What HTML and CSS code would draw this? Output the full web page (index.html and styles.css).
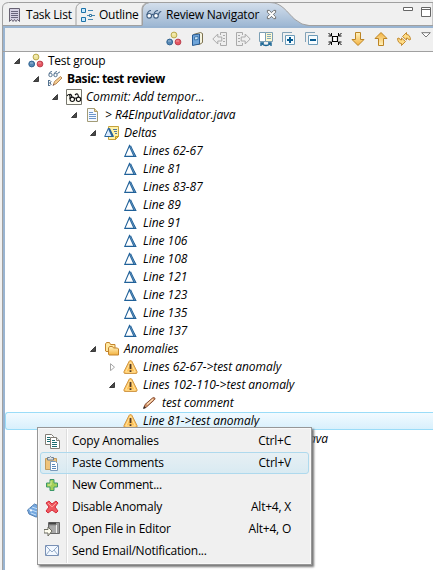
FILE: index.html
```html
<!DOCTYPE html>
<html lang="en">
<head>
<meta charset="utf-8">
<title>Review Navigator</title>
<link rel="stylesheet" href="styles.css">
</head>
<body>
<svg class="defs" width="0" height="0">
<defs>
<linearGradient id="gold" x2="0" y2="1"><stop stop-color="#fff3c0"/><stop offset="1" stop-color="#f3b13f"/></linearGradient>
<linearGradient id="tab" x2="0" y2="1"><stop stop-color="#d4dfec"/><stop offset="1" stop-color="#99b4d1"/></linearGradient>
<symbol id="group" viewBox="0 0 16 16"><circle cx="8" cy="4" r="2.9" fill="#eee49a" stroke="#b9a94c"/><circle cx="3.7" cy="11" r="2.9" fill="#5688b5" stroke="#326592"/><circle cx="12" cy="11" r="2.9" fill="#e65661" stroke="#bd4452"/><path d="M2 10h3M10 10h3M6 3h3" stroke="#fff" opacity=".45"/></symbol>
<symbol id="glasses" viewBox="0 0 16 10"><g fill="#fff" stroke="#405f82" stroke-width="1.1"><circle cx="3.2" cy="6.3" r="2.3"/><circle cx="10" cy="6.3" r="2.3"/><path d="M1 5.5C1 3 3 1 5 1M5.5 5.5q1-1.2 2.2 0M8 4.5Q9 1 12 1M12.3 5.5Q13 2 15.3 2" fill="none"/></g></symbol>
<symbol id="review" viewBox="0 0 16 16"><g fill="none" stroke="#54728f"><circle cx="3.5" cy="4" r="1.7"/><circle cx="8.5" cy="4" r="1.7"/><path d="M2 3Q2.500.5 5 .5M7 3Q8 .5 10 .5M10.500 3Q11 1 13 1"/><path d="M1.500 9v6M1.500 9.500H3q2 1 0 2.500H2M3 12q2.500 1 0 2.500H1"/></g><path d="M6.500 13.500l1-3 6-5 1.500 1.500-6 6z" fill="#f5cd91" stroke="#b98a58"/><path d="M5.500 15l1-2 1 1z" fill="#633"/></symbol>
<symbol id="commit" viewBox="0 0 16 16"><path d="M.5.5h15v15H.5z" fill="#fffef5" stroke="#77776f"/><g fill="none" stroke="#111" stroke-width="1.1"><circle cx="6.300" cy="10.300" r="2.200"/><circle cx="12.500" cy="10.300" r="2.200"/><path d="M1 7q2-3 3 0v3M8.500 9.500q.9-1 1.800 0M3.500 6q1.500-2 2.500 2M9 6q3-3 3.500 2"/></g></symbol>
<symbol id="file" viewBox="0 0 16 16"><path d="M2.500 1.500h7l3 3v10h-10z" fill="#f5f9ff" stroke="#a29b76"/><path d="M9.500 1.500v3h3" fill="#e5d7a1" stroke="#b49d5d"/><path d="M4 5.500h4M4 7.500h7M4 9.500h7M4 11.500h7" stroke="#6c95ca"/></symbol>
<symbol id="deltas" viewBox="0 0 16 16"><path d="M4.500 1.500h10v10l-3 3h-7z" fill="#fff2a8" stroke="#c4a13c"/><path d="M11.500 14.500v-3h3z" fill="#f6d24a" stroke="#c59b24"/><path d="M9 4.500h4M10 6.500h3M11 8.500h2" stroke="#54799d"/><path d="M4.500 3L.7 11.500h8.800z" fill="#dcecff" stroke="#286398"/><path d="M5 3.500l3.500 7.500" stroke="#286398" stroke-width="2"/></symbol>
<symbol id="delta" viewBox="0 0 16 16"><path d="M6.500 2.500L1.800 13.400h11z" fill="#fff" stroke="#206199" stroke-width="1.100"/><path d="M7 3l4.600 10" stroke="#206199" stroke-width="2.300"/><path d="M7.300 3.500l4.400 9.500" stroke="#81a9cc" stroke-width=".6"/></symbol>
<symbol id="folders" viewBox="0 0 16 16"><path d="M1.500 10V3l1-1.500h3l1 2h4.500v7H2z" fill="#ffe8a0" stroke="#c4842d"/><path d="M4.500 13V7l1-1.500h3l1 1.500h4l1 1v6H5z" fill="url(#gold)" stroke="#c4842d"/></symbol>
<symbol id="warn" viewBox="0 0 16 16"><path d="M7.500 1.500q1 0 1.500 1l5 10q.5 2-1 2H2q-1.500 0-1-2l5-10q.5-1 1.500-1z" fill="#ffc357" stroke="#d19a4c"/><path d="M7.500 3L12.300 13H2.700z" fill="none" stroke="#ffe3a2"/><path d="M7.500 5v5M7.500 11.300v1.800" stroke="#543b26" stroke-width="1.800"/></symbol>
<symbol id="pencil" viewBox="0 0 16 16"><path d="M2 13l1-3.500 7.500-6.500q1.500-1 2.300 0t-.8 2.200L4.500 12z" fill="#d89568" stroke="#875037"/><path d="M5 9.500l6-5.300" stroke="#ffe2bd" stroke-width="1.200"/><path d="M1 14l1-3 2 2z" fill="#352824"/></symbol>
<symbol id="open" viewBox="0 0 8 8"><path d="M6.500 1.500v5h-5z" fill="#494949" stroke="#222" stroke-width=".8"/></symbol>
<symbol id="closed" viewBox="0 0 8 8"><path d="M2.500.700l4 3.500-4 3.500z" fill="#fff" stroke="#a6a6a6"/></symbol>
<symbol id="book" viewBox="0 0 16 16"><path d="M4.500 3.500l7-2 2 1v9l-3 2h-6z" fill="#f6f4df" stroke="#7c7150"/><path d="M3.500 4l7-1v10l-7 1.500z" fill="#6fa5da" stroke="#295b93"/><path d="M5.500 6l3.500-.5v3l-3.500.5z" fill="#c8e1f7" stroke="#4279aa"/></symbol>
<symbol id="back" viewBox="0 0 16 16"><path d="M8.500 4V1.500h6v13h-6V12M11 4.500h2M11 7.500h2M11 10.500h2" fill="#eee" stroke="#aaa"/><path d="M.8 8l5-5v3h4v4h-4v3z" fill="#efefef" stroke="#aaa"/></symbol>
<symbol id="both" viewBox="0 0 16 16"><path d="M1.500 1.500h6v9h-6z" fill="#fff" stroke="#7c9fb4"/><path d="M7.500 1.500h7v9h-7z" fill="#fff8cf" stroke="#7c9fb4"/><path d="M9 3.500h4M9 5.500h4M9 7.500h4" stroke="#83aabd"/><path d="M4 13q4 3 8 0M3 15v-3h3M13 15v-3h-3" fill="none" stroke="#176392" stroke-width="1.400"/></symbol>
<symbol id="minus" viewBox="0 0 16 16"><path d="M1.500 11V1.500H11" fill="none" stroke="#82a2b7"/><path d="M4.500 4.500h9v9h-9z" fill="#f6fcff" stroke="#6e9cb9"/><path d="M6 9h6" stroke="#075b91" stroke-width="2"/></symbol>
<symbol id="focus" viewBox="0 0 16 16"><path d="M5.500 5.500h5v5h-5z" fill="#fff" stroke="#000" stroke-width="1.200"/><path d="M1.500 2l3 3M14.500 2l-3 3M1.500 14l3-3M14.500 14l-3-3M4.500 2v3h-3M11.500 2v3h3M4.500 14v-3h-3M11.500 14v-3h3" fill="none" stroke="#000"/></symbol>
<symbol id="down" viewBox="0 0 16 16"><path d="M5.500 1.500h5v7h3.500L8 14.500 2 8.500h3.500z" fill="url(#gold)" stroke="#bc8424"/></symbol>
<symbol id="sync" viewBox="0 0 16 16"><path id="sync-arrow" d="M6.500 5.500l4-4v2q3.500 0 4 5l-1.500.5q-.5-2-2.500-2v2z" fill="#ffdc85" stroke="#bd8020" stroke-width=".9"/><path d="M9.500 10.500l-4 4v-2q-3.500 0-4-5L3 7q.5 2 2.500 2V7z" fill="#ffdc85" stroke="#bd8020" stroke-width=".9"/></symbol>
<symbol id="copy" viewBox="0 0 16 16"><path d="M1.500 1.500h6l2 2v8h-8z" fill="#fff" stroke="#817d75"/><path d="M3 4.500h3M3 6.500h4M3 8.500h4" stroke="#1b6c70"/><path d="M6.500 4.500h6l3 3v8h-9z" fill="#fff" stroke="#817d75"/><path d="M12.500 4.500v3h3" fill="#eee" stroke="#817d75"/><path d="M8 7.500h3M8 9.500h5M8 11.500h5M8 13.500h5" stroke="#1b6c70"/></symbol>
<symbol id="paste" viewBox="0 0 16 16"><path d="M1.500 3.500h11v11h-11z" fill="#efc47c" stroke="#c39a5b"/><path d="M3.500 4V2.500h2q1-2 2 0h2V5h-6z" fill="#e0e1df" stroke="#6e7e90"/><path d="M6.500 6.500h5l2 2v7h-7z" fill="#fff" stroke="#7a9abb"/><path d="M8 9.500h3M8 11.500h4M8 13.500h4" stroke="#5686b8"/></symbol>
<symbol id="plus" viewBox="0 0 16 16"><path d="M6 2.500h4V6h3.500v4H10v3.500H6V10H2.500V6H6z" fill="#a5cf5a" stroke="#3c9868"/><path d="M7 4v4H4" stroke="#d9ec97" fill="none"/></symbol>
<symbol id="cross" viewBox="0 0 16 16"><path d="M2 4l3-2 3 3 4-3 2 2-3 4 3 4-2 2-4-3-4 3-2-2 3-4z" fill="#ef5960" stroke="#d52c3a"/><path d="M4 4l4 4 4-4" stroke="#ff9e97" fill="none"/></symbol>
<symbol id="editor" viewBox="0 0 16 16"><path d="M4.500 1.500h11v11h-11z" fill="#999" stroke="#666"/><path d="M5 2.500h7" stroke="#444" stroke-width="2"/><path d="M6 5h6v7H6z" fill="#aaa"/><path d="M12.500 4v8" stroke="#eee"/><path d="M0 8.500h4V6l4 4-4 5v-3H0z" fill="#fffef0" stroke="#6b6b60"/></symbol>
<symbol id="mail" viewBox="0 0 16 16"><path d="M1.500 2.500h13v10h-13z" fill="#f2f8ff" stroke="#7890b5"/><path d="M2 3l6 6 6-6M2 12l4-5M14 12l-4-5" fill="none" stroke="#94abc8"/></symbol>
</defs>
</svg>
<main class="view">
  <header class="tabs">
    <svg class="tab-shape" width="433" height="28" viewBox="0 0 433 28"><path d="M2.500 28V8q0-5 6-5.500H433V28z" fill="#f0f0f0" stroke="#a0a0a0"/><path d="M3 25.500H433" stroke="#a0a0a0"/><path d="M76 25V9q0-5 6-6.500M142 25V9q0-5 6-6.500" fill="none" stroke="#a0a0a0"/><path d="M142.500 28V10q0-6 7-7.500H270c12 0 17 10 25 17q7 6 14 6h124V28z" fill="url(#tab)"/><path d="M142.500 25V10q0-6 7-7.500H270c12 0 17 10 25 17q7 6 14 6h124" fill="none" stroke="#a0a0a0"/><path d="M3 27H433" stroke="#99b4d1" stroke-width="2"/></svg>
    <div class="tab task"><svg viewBox="0 0 16 16"><path d="M3.500 1.500h10v13l-2-2-1.500 2-1.500-2-1.500 2-1.500-2-2 2z" fill="#d5d1e3" stroke="#676171"/><path d="M5 4.500h7M5 6.500h7M5 8.500h7M5 10.500h7" stroke="#69657d"/></svg><span>Task List</span></div>
    <div class="tab outline"><svg viewBox="0 0 16 16"><path d="M1.500 1.500h4v4h-4zM1.500 10.500h4v4h-4z" fill="#c9eaff" stroke="#1d72a8"/><path d="M8 3.500h5M7 8.500h2M12 8.500h3M8 12.500h5" stroke="#4487b2"/><path d="M9.500 7.500h2v2h-2z" fill="#fff" stroke="#31749f"/></svg><span>Outline</span></div>
    <div class="tab navigator"><svg viewBox="0 0 16 16"><use href="#glasses" y="2" width="16" height="11"/></svg><span>Review Navigator</span><svg class="close" viewBox="0 0 12 12"><path d="M1.500 1.500h2L6 4l2.500-2.500h2v2L8 6l2.500 2.500v2h-2L6 8l-2.500 2.500h-2v-2L4 6 1.500 3.500z" fill="#fff" stroke="#666"/></svg></div>
    <svg class="window-buttons" viewBox="0 0 30 14"><path d="M1.500 2.500h9v3h-9zM19.500 2.500h9v9h-9zM19.500 4.500h9" fill="#fff" stroke="#666"/></svg>
  </header>
  <nav class="toolbar">
    <svg><use href="#group"/></svg><svg><use href="#book"/></svg><svg><use href="#back"/></svg><svg class="mirror"><use href="#back"/></svg><svg><use href="#both"/></svg><svg viewBox="0 0 16 16"><use href="#minus"/><path d="M9 6v6" stroke="#075b91" stroke-width="2"/></svg><svg><use href="#minus"/></svg><svg><use href="#focus"/></svg><svg><use href="#down"/></svg><svg class="flip"><use href="#down"/></svg><svg><use href="#sync"/></svg><svg class="chevron" viewBox="0 0 10 6"><path d="M.7.700h8.600L5 5z" fill="#fff" stroke="#777"/></svg>
  </nav>
  <section class="tree">
    <div class="row l0"><svg class="arrow"><use href="#open"/></svg><svg><use href="#group"/></svg><span>Test group</span></div>
    <div class="row l1 bold"><svg class="arrow"><use href="#open"/></svg><svg><use href="#review"/></svg><span>Basic: test review</span></div>
    <div class="row l2"><svg class="arrow"><use href="#open"/></svg><svg><use href="#commit"/></svg><span>Commit: Add tempor...</span></div>
    <div class="row l3"><svg class="arrow"><use href="#open"/></svg><svg><use href="#file"/></svg><span>&gt; R4EInputValidator.java</span></div>
    <div class="row l4"><svg class="arrow"><use href="#open"/></svg><svg><use href="#deltas"/></svg><span>Deltas</span></div>
    <div class="row l5"><i class="arrow"></i><svg><use href="#delta"/></svg><span>Lines 62-67</span></div>
    <div class="row l5"><i class="arrow"></i><svg><use href="#delta"/></svg><span>Line 81</span></div>
    <div class="row l5"><i class="arrow"></i><svg><use href="#delta"/></svg><span>Lines 83-87</span></div>
    <div class="row l5"><i class="arrow"></i><svg><use href="#delta"/></svg><span>Line 89</span></div>
    <div class="row l5"><i class="arrow"></i><svg><use href="#delta"/></svg><span>Line 91</span></div>
    <div class="row l5"><i class="arrow"></i><svg><use href="#delta"/></svg><span>Line 106</span></div>
    <div class="row l5"><i class="arrow"></i><svg><use href="#delta"/></svg><span>Line 108</span></div>
    <div class="row l5"><i class="arrow"></i><svg><use href="#delta"/></svg><span>Line 121</span></div>
    <div class="row l5"><i class="arrow"></i><svg><use href="#delta"/></svg><span>Line 123</span></div>
    <div class="row l5"><i class="arrow"></i><svg><use href="#delta"/></svg><span>Line 135</span></div>
    <div class="row l5"><i class="arrow"></i><svg><use href="#delta"/></svg><span>Line 137</span></div>
    <div class="row l4"><svg class="arrow"><use href="#open"/></svg><svg><use href="#folders"/></svg><span>Anomalies</span></div>
    <div class="row l5"><svg class="arrow"><use href="#closed"/></svg><svg><use href="#warn"/></svg><span>Lines 62-67-&gt;test anomaly</span></div>
    <div class="row l5"><svg class="arrow"><use href="#open"/></svg><svg><use href="#warn"/></svg><span>Lines 102-110-&gt;test anomaly</span></div>
    <div class="row l6"><i class="arrow"></i><svg><use href="#pencil"/></svg><span>test comment</span></div>
    <div class="row l5 selected"><i class="arrow"></i><svg><use href="#warn"/></svg><span>Line 81-&gt;test anomaly</span></div>
    <div class="row partial"><span>.java</span></div>
  </section>
  <svg class="tag" viewBox="0 0 14 16"><path d="M1.500 8l7-6L15 5v9l-5 1-7-3z" fill="#75a8df" stroke="#5681b2"/><path d="M3 7l8 3M6 5l6 2M5 11l5 2" stroke="#c4dff8"/><circle cx="5" cy="8.500" r="1" fill="#fff"/></svg>
  <aside class="menu">
    <div class="item"><svg><use href="#copy"/></svg><span>Copy Anomalies</span><kbd>Ctrl+C</kbd></div>
    <div class="item active"><svg><use href="#paste"/></svg><span>Paste Comments</span><kbd>Ctrl+V</kbd></div>
    <div class="item"><svg><use href="#plus"/></svg><span>New Comment...</span></div>
    <div class="item"><svg><use href="#cross"/></svg><span>Disable Anomaly</span><kbd>Alt+4, X</kbd></div>
    <div class="item"><svg><use href="#editor"/></svg><span>Open File in Editor</span><kbd>Alt+4, O</kbd></div>
    <div class="item"><svg><use href="#mail"/></svg><span>Send Email/Notification...</span></div>
  </aside>
</main>
</body>
</html>
```
FILE: styles.css
```css
* { box-sizing: border-box; }
body { margin: 0; background: #fff; font: 12px/18px "Open Sans", "Noto Sans", sans-serif; letter-spacing: -.22px; color: #000; overflow: hidden; }
svg { width: 16px; height: 16px; flex: none; display: block; }
.defs { position: absolute; width: 0; height: 0; }
.view { position: relative; width: 433px; height: 570px; background: #f0f0f0; }
.tabs { position: relative; height: 28px; display: flex; padding-left: 6px; }
.tab-shape { position: absolute; left: 0; top: 0; width: 433px; height: 28px; }
.tab { position: relative; display: flex; align-items: center; padding-top: 3px; height: 26px; white-space: nowrap; }
.task { width: 73px; gap: 4px; }
.outline { width: 67px; padding-left: 1px; gap: 3px; }
.navigator { gap: 4px; }
.close { width: 11px; height: 11px; margin-left: 3px; }
.window-buttons { position: relative; width: 30px; height: 14px; margin: 5px 1px 0 auto; }
.toolbar { height: 24px; margin-left: 2px; border-left: 1px solid #a0a0a0; border-bottom: 1px solid #a0a0a0; box-shadow: inset 2px 0 #99b4d1; display: flex; justify-content: flex-end; align-items: center; gap: 7px; padding: 0 2px 1px 0; }
.mirror { transform: scaleX(-1); }
.flip { transform: scaleY(-1); }
.chevron { width: 10px; height: 6px; margin: 0 0 9px 2px; }
.tree { height: 518px; margin-left: 2px; border-left: 1px solid #a0a0a0; box-shadow: inset 2px 0 #99b4d1; background: #fff; padding-left: 2px; font-style: italic; letter-spacing: -.04px; }
.row { height: 18px; display: flex; align-items: center; white-space: nowrap; padding-left: 8px; }
.row .arrow { width: 8px; height: 8px; margin-right: 7px; }
.row span { margin-left: 4px; }
.l0 { font-style: normal; letter-spacing: -.25px; }
.l1 { padding-left: 27px; }
.l2 { padding-left: 46px; }
.l3 { padding-left: 65px; }
.l4 { padding-left: 84px; }
.l5 { padding-left: 103px; }
.l6 { padding-left: 122px; }
.bold { font-style: normal; font-weight: 700; letter-spacing: -.38px; }
.selected { background: linear-gradient(#f2faff, #d8f0fc); border: 1px solid #9adcf8; border-right: 0; border-radius: 3px 0 0 3px; padding-left: 102px; }
.partial { padding-left: 294px; }
.tag { position: absolute; left: 26px; top: 502px; width: 14px; height: 16px; }
.menu { position: absolute; left: 37px; top: 427px; width: 275px; height: 138px; padding: 2px; border: 1px solid #979797; background: linear-gradient(90deg, transparent 28px, #ddd 28px, #ddd 29px, #fff 29px, #fff 30px, transparent 30px), #f0f0f0; box-shadow: inset 0 0 0 1px #f8f8f8, 2px 2px 2px #777; }
.item { height: 22px; padding: 0 17px 0 3px; border: 1px solid transparent; display: flex; align-items: center; border-radius: 3px; }
.item span { margin-left: 12px; white-space: nowrap; }
.item kbd { margin-left: auto; font: inherit; white-space: nowrap; }
.active { background: linear-gradient(rgba(225,239,246,.6), rgba(207,232,243,.7)); border-color: #aed9ed; }
```
